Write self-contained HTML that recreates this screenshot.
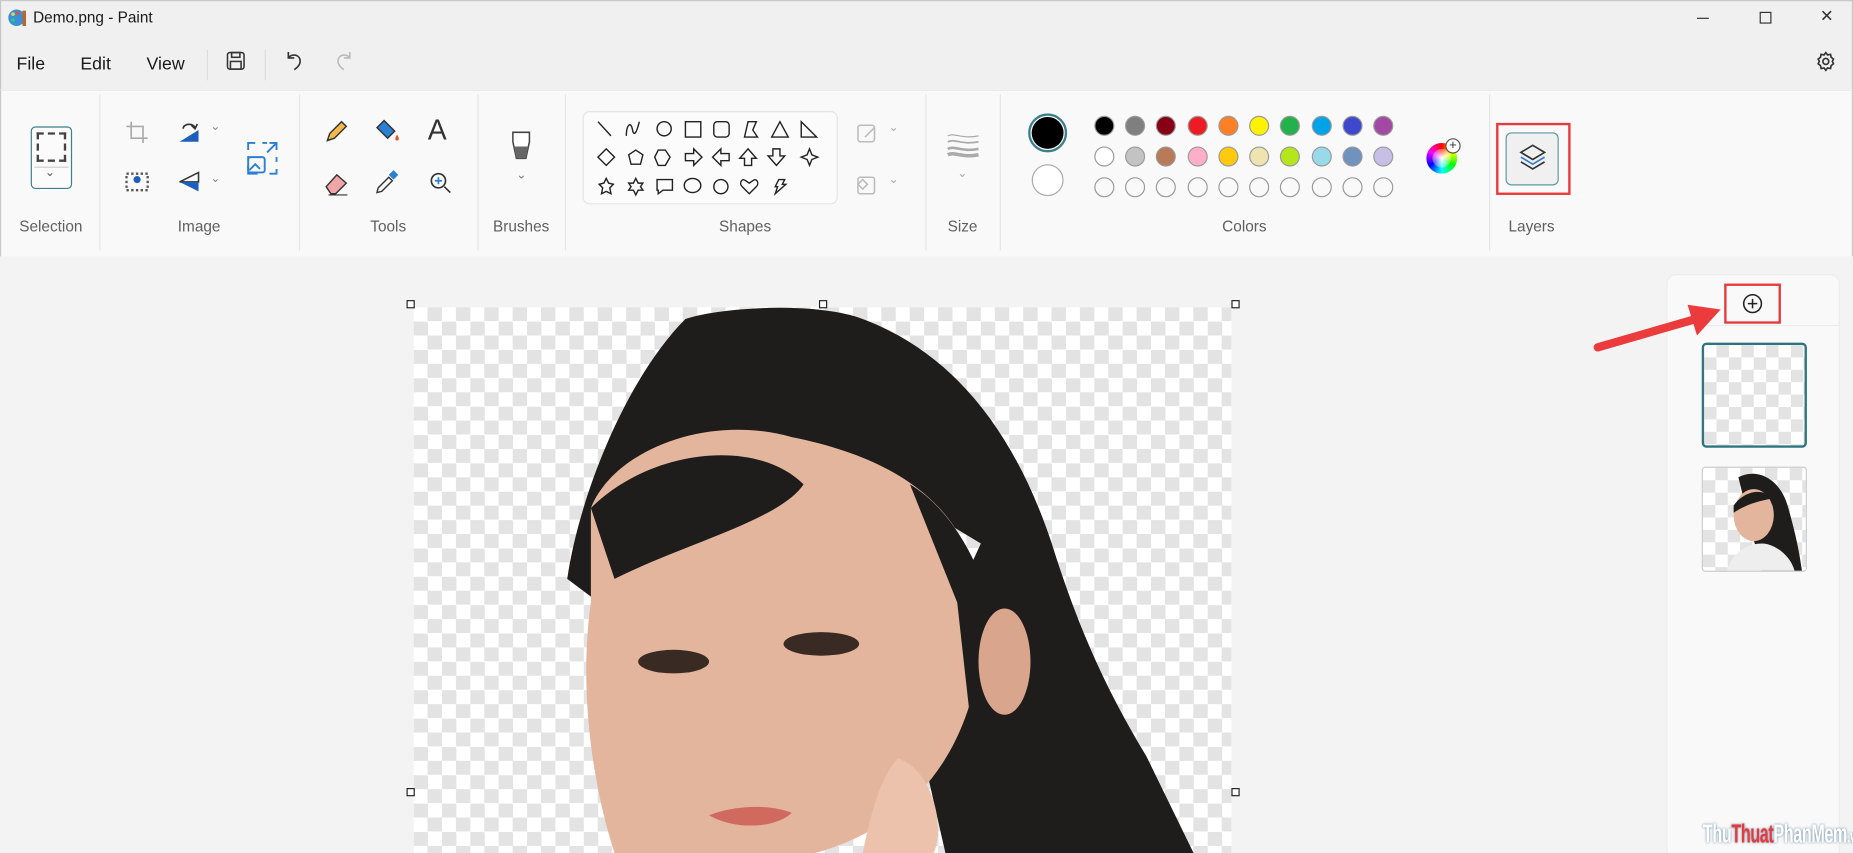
<!DOCTYPE html>
<html><head><meta charset="utf-8"><style>
*{margin:0;padding:0;box-sizing:border-box}
html,body{width:1853px;height:853px;overflow:hidden;background:#f3f3f3;font-family:"Liberation Sans",sans-serif}
#w{position:absolute;left:0;top:0;width:1568px;height:722px;transform:scale(1.18176,1.18144);transform-origin:0 0;background:#f3f3f3;overflow:hidden}
.a{position:absolute}
.lbl{position:absolute;top:184px;font-size:13px;color:#5f5f5f;text-align:center}
.div{position:absolute;top:80px;width:1px;height:132px;background:#e5e5e5}
.c{position:absolute;width:17px;height:17px;border-radius:50%;border:1px solid #9a9a9a}
.chk{background-color:#fff;background-image:conic-gradient(#e3e3e3 25%,#fff 0 50%,#e3e3e3 0 75%,#fff 0);background-size:24px 24px}
</style></head><body><div id="w">
<div class="a" style="left:0;top:0;width:1568px;height:76px;background:#f0f0f0;border:1px solid #c8c8c8;border-bottom:none"></div>
<svg class="a" style="left:6px;top:6px" width="18" height="18" viewBox="0 0 18 18"><circle cx="8" cy="9" r="7" fill="#3a8fd8"/><circle cx="5" cy="6" r="1.5" fill="#f4d03f"/><circle cx="9" cy="5" r="1.5" fill="#e74c3c"/><circle cx="5" cy="11" r="1.5" fill="#2ecc71"/><rect x="13" y="3" width="3" height="13" fill="#b8682a"/></svg>
<div class="a" style="left:28px;top:7px;font-size:13px;color:#1a1a1a">Demo.png - Paint</div>
<div class="a" style="left:1436px;top:15px;width:10px;height:1px;background:#333"></div>
<div class="a" style="left:1489px;top:10px;width:10px;height:10px;border:1px solid #333"></div>
<div class="a" style="left:1540px;top:5px;font-size:14px;color:#333">✕</div>
<div class="a" style="left:14px;top:46px;font-size:15px;color:#1a1a1a">File</div>
<div class="a" style="left:68px;top:46px;font-size:15px;color:#1a1a1a">Edit</div>
<div class="a" style="left:124px;top:46px;font-size:15px;color:#1a1a1a">View</div>
<div class="a" style="left:175px;top:42px;width:1px;height:26px;background:#ddd"></div>
<div class="a" style="left:224px;top:42px;width:1px;height:26px;background:#ddd"></div>
<svg class="a" style="left:191px;top:43px" width="17" height="17" viewBox="0 0 17 17" fill="none" stroke="#333" stroke-width="1.3"><rect x="1.5" y="1.5" width="14" height="14" rx="2"/><rect x="5" y="1.5" width="7" height="4"/><rect x="4" y="9" width="9" height="6.5"/></svg>
<svg class="a" style="left:240px;top:42px" width="18" height="18" viewBox="0 0 18 18" fill="none" stroke="#333" stroke-width="1.4"><path d="M4 2v5h5M4 7c3-4 10-3 10 3 0 3-2 5-5 7"/></svg>
<svg class="a" style="left:282px;top:42px" width="18" height="18" viewBox="0 0 18 18" fill="none" stroke="#bbb" stroke-width="1.4"><path d="M14 2v5H9M14 7c-3-4-10-3-10 3 0 3 2 5 5 7"/></svg>
<svg class="a" style="left:1536px;top:43px" width="18" height="18" viewBox="0 0 18 18" fill="none" stroke="#333" stroke-width="1.4"><circle cx="9" cy="9" r="2.5"/><path d="M9 1.5l1.5 2 2.5-.5.5 2.5 2 1.5-1 2 1 2-2 1.5-.5 2.5-2.5-.5L9 16.5l-1.5-2-2.5.5-.5-2.5-2-1.5 1-2-1-2 2-1.5.5-2.5 2.5.5z"/></svg>
<div class="a" style="left:0;top:76px;width:1568px;height:141px;background:#f9f9f9;border-left:1px solid #c8c8c8;border-right:1px solid #c8c8c8;border-top:1px solid #ebebeb"></div>
<div class="div" style="left:84px"></div><div class="div" style="left:253px"></div><div class="div" style="left:404px"></div><div class="div" style="left:478px"></div><div class="div" style="left:783px"></div><div class="div" style="left:846px"></div><div class="div" style="left:1260px"></div>
<div class="lbl" style="left:0;width:86px">Selection</div>
<div class="lbl" style="left:84px;width:169px">Image</div>
<div class="lbl" style="left:253px;width:151px">Tools</div>
<div class="lbl" style="left:404px;width:74px">Brushes</div>
<div class="lbl" style="left:478px;width:305px">Shapes</div>
<div class="lbl" style="left:783px;width:63px">Size</div>
<div class="lbl" style="left:846px;width:414px">Colors</div>
<div class="lbl" style="left:1260px;width:72px">Layers</div>
<div class="a" style="left:26px;top:107px;width:35px;height:53px;border:1px solid #3e7f8c;border-radius:4px;background:#fbfbfb"></div>
<div class="a" style="left:31px;top:112px;width:25px;height:25px;border:2px dashed #444"></div>
<div class="a" style="left:29px;top:141px;width:29px;height:1px;background:#ccc"></div>
<div class="a" style="left:38px;top:141px;font-size:10px;color:#555">⌄</div>
<svg class="a" style="left:106px;top:102px" width="20" height="20" viewBox="0 0 20 20" fill="none" stroke="#aaa" stroke-width="1.4"><path d="M5 1v14h14M1 5h14v14"/></svg>
<svg class="a" style="left:150px;top:100px" width="20" height="22"><path d="M2 20L18 10V20z" fill="#1d5fbf"/><path d="M5 9c0-5 10-5 10 0M12 6l3 3 2-4" fill="none" stroke="#333" stroke-width="1.4"/></svg>
<div class="a" style="left:178px;top:102px;font-size:10px;color:#888">⌄</div>
<svg class="a" style="left:106px;top:145px" width="20" height="18"><rect x="1" y="2" width="18" height="14" fill="none" stroke="#555" stroke-dasharray="2 2" stroke-width="2"/><circle cx="10" cy="7" r="3" fill="#1d5fbf"/></svg>
<svg class="a" style="left:150px;top:143px" width="20" height="22"><path d="M2 11L18 3V11z" fill="none" stroke="#333" stroke-width="1.3"/><path d="M2 11L18 19V11z" fill="#1d5fbf"/></svg>
<div class="a" style="left:178px;top:146px;font-size:10px;color:#888">⌄</div>
<svg class="a" style="left:208px;top:119px" width="28" height="30" fill="none" stroke="#2d7fd1" stroke-width="1.6"><path d="M2 8V2h6M14 2h4M2 13v4M10 28H2v-7M26 14v4M26 24v4h-6"/><rect x="2" y="14" width="14" height="13" rx="2"/><path d="M3 25l5-5 4 4M18 10l8-8M20 2h6v6"/></svg>
<svg class="a" style="left:274px;top:100px" width="22" height="22"><path d="M3 19l2-6L15 3l4 4L9 17z" fill="#f2b84b" stroke="#333" stroke-width="1.2"/></svg>
<svg class="a" style="left:316px;top:100px" width="24" height="24"><path d="M3 8l6-6 9 9-6 6z" fill="#2d7fd1" stroke="#333" stroke-width="1.2"/><path d="M20 14c2 3 2 5 0 5s-2-2 0-5z" fill="#e0572c"/></svg>
<div class="a" style="left:362px;top:97px;font-size:24px;color:#333">A</div>
<svg class="a" style="left:274px;top:144px" width="22" height="22"><path d="M2 14l9-10 8 7-9 9H6z" fill="#f0a6a6" stroke="#333" stroke-width="1.2"/><path d="M4 21h16" stroke="#333"/></svg>
<svg class="a" style="left:316px;top:143px" width="22" height="22"><path d="M3 20l1-4 9-9 3 3-9 9z" fill="none" stroke="#333" stroke-width="1.2"/><path d="M13 5l4-4 4 4-4 4z" fill="#2d7fd1"/></svg>
<svg class="a" style="left:363px;top:145px" width="20" height="20" fill="none" stroke="#333" stroke-width="1.4"><circle cx="8" cy="8" r="6"/><path d="M13 13l5 5"/><path d="M8 5v6M5 8h6" stroke="#2d7fd1"/></svg>
<svg class="a" style="left:432px;top:110px" width="18" height="28"><path d="M2 2h14v8l-3 14H5L2 10z" fill="#fff" stroke="#444" stroke-width="1.3"/><path d="M3 14h12l-2 10H5z" fill="#666"/></svg>
<div class="a" style="left:437px;top:143px;font-size:10px;color:#777">⌄</div>
<div class="a" style="left:493px;top:94px;width:216px;height:79px;border:1px solid #e4e4e4;border-radius:6px;background:#fbfbfb"></div>
<svg class="a" style="left:500px;top:98px" width="200" height="72" fill="none" stroke="#222" stroke-width="1.2">
<path d="M6 5l11 12"/><path d="M30 17c0-10 4-12 5-6s3 6 6-6"/><circle cx="62" cy="11" r="6"/><rect x="80" y="5" width="13" height="13"/><rect x="104" y="5" width="13" height="13" rx="3"/><path d="M130 18l3-13h7l-3 7 4 6z"/><path d="M153 18l7-13 7 13z"/><path d="M178 5v13h13z"/>
<path d="M13 28l7 7-7 7-7-7z"/><path d="M38 29l6 4-2 8h-8l-2-8z"/><path d="M57 29l6 0 4 6-4 7h-6l-3-7z"/><path d="M80 32h7v-4l7 7-7 7v-4h-7z"/><path d="M117 32h-7v-4l-7 7 7 7v-4h7z"/><path d="M130 36v6h6v-6h4l-7-8-7 8z"/><path d="M154 34v-6h6v6h4l-7 8-7-8z"/><path d="M185 28l2 5 5 2-5 2-2 5-2-5-5-2 5-2z"/>
<path d="M13 53l2 4 4 1-3 3 1 5-4-2-4 2 1-5-3-3 4-1z"/><path d="M38 53l2 4h4l-2 3 2 3h-4l-2 4-2-4h-4l2-3-2-3h4z"/><path d="M56 54h13v9h-8l-4 3v-3h-1z"/><ellipse cx="86" cy="59" rx="7" ry="6"/><circle cx="110" cy="60" r="6"/><path d="M134 66l-6-6c-3-3 0-8 3-5l3 2 3-2c3-3 6 2 3 5z"/><path d="M156 66l2-6h-2l3-6h5l-2 4h3z"/></svg>
<svg class="a" style="left:724px;top:102px" width="20" height="20" fill="none" stroke="#bbb" stroke-width="1.3"><rect x="2" y="4" width="14" height="14" rx="2"/><path d="M8 14l8-8"/></svg>
<div class="a" style="left:752px;top:103px;font-size:10px;color:#aaa">⌄</div>
<svg class="a" style="left:724px;top:146px" width="20" height="20" fill="none" stroke="#bbb" stroke-width="1.3"><rect x="2" y="4" width="14" height="14" rx="2"/><path d="M6 6l4 4-4 4-4-4z"/></svg>
<div class="a" style="left:752px;top:147px;font-size:10px;color:#aaa">⌄</div>
<svg class="a" style="left:801px;top:112px" width="28" height="22" fill="none" stroke="#aaa"><path d="M1 3c6-3 12 3 26 0" stroke-width="1"/><path d="M1 8c6-3 12 3 26 0" stroke-width="1.5"/><path d="M1 14c6-3 12 3 26 0" stroke-width="2.2"/><path d="M1 19c6-3 12 3 26 0" stroke-width="3"/></svg>
<div class="a" style="left:810px;top:142px;font-size:10px;color:#aaa">⌄</div>
<div class="a" style="left:870px;top:96px;width:33px;height:33px;border-radius:50%;border:2px solid #3e7f8c;background:#fff"></div>
<div class="a" style="left:873px;top:99px;width:27px;height:27px;border-radius:50%;background:#000"></div>
<div class="a" style="left:873px;top:139px;width:27px;height:27px;border-radius:50%;background:#fff;border:1px solid #aaa"></div>
<div class="c" style="left:926px;top:98px;background:#000"></div><div class="c" style="left:952px;top:98px;background:#7f7f7f"></div><div class="c" style="left:978px;top:98px;background:#880015"></div><div class="c" style="left:1005px;top:98px;background:#ed1c24"></div><div class="c" style="left:1031px;top:98px;background:#ff7f27"></div><div class="c" style="left:1057px;top:98px;background:#fff200"></div><div class="c" style="left:1083px;top:98px;background:#22b14c"></div><div class="c" style="left:1110px;top:98px;background:#00a2e8"></div><div class="c" style="left:1136px;top:98px;background:#3f48cc"></div><div class="c" style="left:1162px;top:98px;background:#a349a4"></div>
<div class="c" style="left:926px;top:124px;background:#fff"></div><div class="c" style="left:952px;top:124px;background:#c3c3c3"></div><div class="c" style="left:978px;top:124px;background:#b97a57"></div><div class="c" style="left:1005px;top:124px;background:#ffaec9"></div><div class="c" style="left:1031px;top:124px;background:#ffc90e"></div><div class="c" style="left:1057px;top:124px;background:#efe4b0"></div><div class="c" style="left:1083px;top:124px;background:#b5e61d"></div><div class="c" style="left:1110px;top:124px;background:#99d9ea"></div><div class="c" style="left:1136px;top:124px;background:#7092be"></div><div class="c" style="left:1162px;top:124px;background:#c8bfe7"></div>
<div class="c" style="left:926px;top:150px"></div><div class="c" style="left:952px;top:150px"></div><div class="c" style="left:978px;top:150px"></div><div class="c" style="left:1005px;top:150px"></div><div class="c" style="left:1031px;top:150px"></div><div class="c" style="left:1057px;top:150px"></div><div class="c" style="left:1083px;top:150px"></div><div class="c" style="left:1110px;top:150px"></div><div class="c" style="left:1136px;top:150px"></div><div class="c" style="left:1162px;top:150px"></div>
<div class="a" style="left:1207px;top:121px;width:26px;height:26px;border-radius:50%;background:conic-gradient(red,yellow,lime,cyan,blue,magenta,red)"></div>
<div class="a" style="left:1212px;top:126px;width:16px;height:16px;border-radius:50%;background:radial-gradient(#fff,rgba(255,255,255,0))"></div>
<div class="a" style="left:1223px;top:117px;width:13px;height:13px;border-radius:50%;background:#fff;border:1px solid #555;font-size:11px;line-height:10px;text-align:center;color:#333">+</div>
<div class="a" style="left:1274px;top:112px;width:45px;height:45px;border:1px solid #5a9aa5;border-radius:5px;background:#f0f0f0"></div>
<svg class="a" style="left:1284px;top:120px" width="26" height="28" fill="none" stroke-width="1.4"><path d="M13 3l10 6-10 6-10-6z" stroke="#333"/><path d="M3 13l10 6 10-6" stroke="#2d7fd1"/><path d="M3 17l10 6 10-6" stroke="#333"/></svg>
<div class="a" style="left:1266px;top:104px;width:63px;height:61px;border:2px solid #e8393b"></div>
<div class="a chk" style="left:350px;top:260px;width:692px;height:462px;overflow:hidden">
<svg width="692" height="462" viewBox="0 0 692 462" style="position:absolute;left:0;top:0">
<path d="M230 10C260 0 340-5 380 10 460 40 510 110 540 200 565 280 590 330 620 380L660 462H450L420 330 480 200 380 140 250 160 170 260 130 230C140 160 180 60 230 10z" fill="#1f1c1c"/>
<path d="M150 170C170 120 250 90 320 110 420 130 490 180 480 290 470 380 420 440 340 462H170C150 400 140 320 150 250z" fill="#e3b59d"/>
<path d="M150 170C200 120 290 110 330 150 310 180 230 200 170 230z" fill="#1f1c1c"/>
<path d="M420 150C470 180 500 260 500 330L470 340 460 250z" fill="#1f1c1c"/>
<ellipse cx="500" cy="300" rx="22" ry="45" fill="#d9a58c"/>
<ellipse cx="220" cy="300" rx="30" ry="10" fill="#3a2a24"/><ellipse cx="345" cy="285" rx="32" ry="10" fill="#3a2a24"/>
<path d="M250 430c20-8 50-10 70-2-15 14-50 14-70 2z" fill="#d06a5f"/>
<path d="M380 462c10-50 20-70 30-80 30 10 40 60 30 80z" fill="#ecc2ad"/>
</svg></div>
<div class="a" style="left:344px;top:254px;width:7px;height:7px;border:1px solid #222;background:#fff"></div>
<div class="a" style="left:693px;top:254px;width:7px;height:7px;border:1px solid #222;background:#fff"></div>
<div class="a" style="left:1042px;top:254px;width:7px;height:7px;border:1px solid #222;background:#fff"></div>
<div class="a" style="left:344px;top:667px;width:7px;height:7px;border:1px solid #222;background:#fff"></div>
<div class="a" style="left:1042px;top:667px;width:7px;height:7px;border:1px solid #222;background:#fff"></div>
<div class="a" style="left:1410px;top:232px;width:147px;height:495px;background:#f9f9f9;border:1px solid #ececec;border-radius:8px"></div>
<div class="a" style="left:1410px;top:275px;width:147px;height:1px;background:#ececec"></div>
<svg class="a" style="left:1474px;top:248px" width="18" height="18" fill="none" stroke="#222" stroke-width="1.3"><circle cx="9" cy="9" r="7.5"/><path d="M9 5v8M5 9h8"/></svg>
<div class="a" style="left:1459px;top:240px;width:48px;height:34px;border:2px solid #e8393b"></div>
<div class="a chk" style="left:1440px;top:290px;width:89px;height:89px;border:2px solid #2e7580;border-radius:4px;background-size:21px 21px"></div>
<div class="a chk" style="left:1440px;top:395px;width:89px;height:89px;border:1px solid #ccc;border-radius:3px;background-size:21px 21px;overflow:hidden">
<svg width="89" height="89" viewBox="0 0 89 89"><path d="M30 8c15-8 35 0 42 25s10 40 12 56H50z" fill="#1f1c1c"/><ellipse cx="43" cy="40" rx="17" ry="22" fill="#e3b59d"/><path d="M26 32c8-12 25-16 32-6-10 2-20 4-32 12z" fill="#1f1c1c"/><path d="M20 89c5-20 20-25 30-25s25 10 28 25z" fill="#eee"/></svg></div>
<svg class="a" style="left:1340px;top:250px" width="130" height="60"><path d="M12 44L95 20" stroke="#ec3b3d" stroke-width="7" stroke-linecap="round"/><path d="M88 8l28 4-20 22z" fill="#ec3b3d"/></svg>
<div class="a" style="left:1441px;top:693px;font-size:22px;font-weight:bold;color:#fff;text-shadow:0 0 3px #5a7ea0;letter-spacing:-0.5px;white-space:nowrap;transform:scaleX(0.62);transform-origin:0 0">Thu<span style="color:#e8393b">Thuat</span>PhanMem<span style="font-size:16px">.vn</span></div>
</div></body></html>
